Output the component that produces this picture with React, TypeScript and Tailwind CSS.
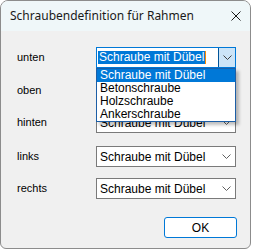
import React from "react";

const Chevron = ({ color = "#606060" }: { color?: string }) => (
  <svg width="9" height="5" viewBox="0 0 9 5" className="block">
    <path d="M0.5 0.5 L4.5 4.5 L8.5 0.5" fill="none" stroke={color} strokeWidth="1" />
  </svg>
);

const Combo = ({ focused = false, open = false }: { focused?: boolean; open?: boolean }) => (
  <div className="relative w-[140px] h-[21px] text-[12px]">
    <div
      className={
        focused
          ? "w-full h-full flex items-center bg-white border border-[#0078d7]"
          : "w-full h-full flex items-center bg-white border border-[#7a7a7a]"
      }
    >
      <div className="flex-1 pl-[1px] flex items-center">
        {focused ? (
          <span className="bg-[#0078d7] text-white px-[1px] h-[13px] leading-[13px] border-r border-[#ff8c00]">Schraube mit Dübel</span>
        ) : (
          <span className="pl-[2px]">Schraube mit Dübel</span>
        )}
      </div>
      {focused ? (
        <div className="w-[17px] h-full bg-[#cce4f7] border-l border-[#005499] flex items-center justify-center">
          <Chevron color="#404040" />
        </div>
      ) : (
        <div className="w-[17px] h-full flex items-center justify-center">
          <Chevron />
        </div>
      )}
    </div>
    {open && (
      <div className="absolute left-0 top-[21px] w-[140px] bg-white border border-[#1c5ea6] shadow-[3px_3px_3px_rgba(0,0,0,0.25)] z-10 flex flex-col">
        <div className="h-[13px] leading-[13px] pl-[3px] bg-[#0078d7] text-white">Schraube mit Dübel</div>
        <div className="h-[13px] leading-[13px] pl-[3px]">Betonschraube</div>
        <div className="h-[13px] leading-[13px] pl-[3px]">Holzschraube</div>
        <div className="h-[13px] leading-[13px] pl-[3px]">Ankerschraube</div>
      </div>
    )}
  </div>
);

const Row = ({ label, children, className = "" }: { label: string; children: React.ReactNode; className?: string }) => (
  <div className={"flex items-center " + className}>
    <div className="w-[95px] pl-[16px]">{label}</div>
    {children}
  </div>
);

export default function App() {
  return (
    <div className="w-[253px] h-[250px] bg-white">
      <div
        className="w-[251px] h-[249px] border border-[#8c8c8c] rounded-t-[8px] rounded-b-[6px] overflow-hidden bg-[#f0f0f0] flex flex-col text-[11px] text-black"
        style={{ fontFamily: '"Liberation Sans", Arial, sans-serif' }}
      >
        <div
          className="h-[30px] bg-[#eff7f9] flex items-center justify-between pl-[9px] pr-[8px] text-[12px] text-[#1a1a1a]"
          style={{ fontFamily: '"Noto Sans", "Open Sans", sans-serif' }}
        >
          <span>Schraubendefinition für Rahmen</span>
          <svg width="10" height="10" viewBox="0 0 10 10" className="mr-[1px]">
            <path d="M0.5 0.5 L9.5 9.5 M9.5 0.5 L0.5 9.5" stroke="#1a1a1a" strokeWidth="1" />
          </svg>
        </div>
        <div className="flex flex-col pt-[16px]">
          <Row label="unten">
            <Combo focused open />
          </Row>
          <Row label="oben" className="mt-[12px]">
            <Combo />
          </Row>
          <Row label="hinten" className="mt-[11px]">
            <Combo />
          </Row>
          <Row label="links" className="mt-[13px]">
            <Combo />
          </Row>
          <Row label="rechts" className="mt-[11px]">
            <Combo />
          </Row>
          <div className="flex justify-end pr-[13px] mt-[18px]">
            <button className="w-[73px] h-[21px] bg-white border border-[#0078d7] rounded-[3px] flex items-center justify-center text-[12px] leading-none">
              OK
            </button>
          </div>
        </div>
      </div>
    </div>
  );
}
